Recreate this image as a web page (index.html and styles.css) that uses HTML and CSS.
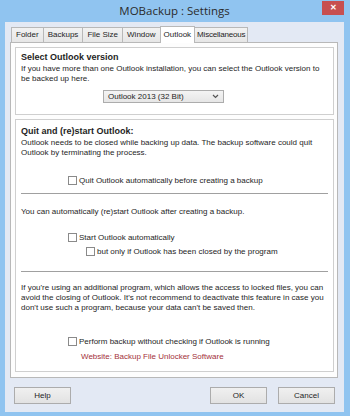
FILE: index.html
```html
<!DOCTYPE html>
<html lang="en">
<head>
    <meta charset="UTF-8">
    <title>MOBackup : Settings</title>
    <link rel="stylesheet" href="styles.css">
</head>
<body>
    <div class="window">
        <div class="titlebar">
            <span></span>
            <div class="title">MOBackup : Settings</div>
            <div class="close">&#x2715;</div>
        </div>
        <div class="client">
            <div class="tabs">
                <div class="tab">Folder</div>
                <div class="tab">Backups</div>
                <div class="tab">File Size</div>
                <div class="tab">Window</div>
                <div class="tab active">Outlook</div>
                <div class="tab misc">Miscellaneous</div>
            </div>
            <div class="panel">
                <div class="group first">
                    <div class="heading">Select Outlook version</div>
                    <p>If you have more than one Outlook installation, you can select the Outlook version to be backed up here.</p>
                    <div class="select">
                        <span>Outlook 2013 (32 Bit)</span>
                        <svg width="7" height="5" viewBox="0 0 7 5"><path d="M1 1 L3.5 3.5 L6 1" fill="none" stroke="#555" stroke-width="1.2"/></svg>
                    </div>
                </div>
                <div class="group second">
                    <div class="heading">Quit and (re)start Outlook:</div>
                    <p>Outlook needs to be closed while backing up data. The backup software could quit Outlook by terminating the process.</p>
                    <label class="check quit"><span class="box"></span>Quit Outlook automatically before creating a backup</label>
                    <div class="sep"></div>
                    <p class="restart">You can automatically (re)start Outlook after creating a backup.</p>
                    <label class="check start"><span class="box"></span>Start Outlook automatically</label>
                    <label class="check only"><span class="box"></span>but only if Outlook has been closed by the program</label>
                    <div class="sep second-sep"></div>
                    <p class="locked">If you're using an additional program, which allows the access to locked files, you can avoid the closing of Outlook. It's not recommend to deactivate this feature in case you don't use such a program, because your data can't be saved then.</p>
                    <label class="check perform"><span class="box"></span>Perform backup without checking if Outlook is running</label>
                    <a class="link" href="#">Website: Backup File Unlocker Software</a>
                </div>
            </div>
            <div class="buttons">
                <button>Help</button>
                <span class="spacer"></span>
                <button>OK</button>
                <button>Cancel</button>
            </div>
        </div>
    </div>
</body>
</html>
```

FILE: styles.css
```css
body {
    margin: 0;
    padding: 0;
    font-family: "Liberation Sans", Arial, sans-serif;
    font-size: 8px;
    color: #1e1e1e;
}
.window {
    width: 350px;
    height: 416px;
    box-sizing: border-box;
    background-color: #90c4f0;
    padding: 0 6px 4px 5px;
    display: flex;
    flex-direction: column;
}
.titlebar {
    height: 22px;
    display: grid;
    grid-template-columns: 1fr auto 1fr;
    align-items: start;
}
.title {
    font-family: "Open Sans", "Liberation Sans", sans-serif;
    font-size: 11.5px;
    color: #2b2b2b;
    padding-top: 3px;
}
.close {
    justify-self: end;
    width: 22px;
    height: 14px;
    margin-top: 1px;
    background-color: #c74f50;
    color: #fff;
    font-size: 8px;
    font-weight: bold;
    text-align: center;
    line-height: 14px;
}
.client {
    flex: 1;
    background-color: #e3e9f4;
    padding: 4px 6px 0 5px;
    display: flex;
    flex-direction: column;
}
.tabs {
    display: flex;
    align-items: flex-end;
    padding-left: 1px;
    height: 16px;
    position: relative;
    z-index: 1;
}
.tab {
    height: 15px;
    box-sizing: border-box;
    padding: 0 4px;
    line-height: 14px;
    border: 1px solid #b8b8b8;
    border-bottom: none;
    margin-right: -1px;
    background: linear-gradient(#f2f2f2, #e6e6e6);
}
.tab.active {
    height: 17px;
    margin-bottom: -1px;
    background: #fff;
    line-height: 15px;
    padding: 0 3px;
}
.tab.misc {
    padding: 0 2px;
    letter-spacing: -0.2px;
}
.panel {
    height: 336px;
    box-sizing: border-box;
    border: 1px solid #b8b8b8;
    background-color: #fdfdfd;
    padding: 4px 3px 0 4px;
}
.group {
    border: 1px solid #cfcfcf;
    background-color: #fff;
    padding: 4px 5px 0 5px;
}
.group.first {
    height: 68px;
    box-sizing: border-box;
}
.group.second {
    margin-top: 4px;
    height: 253px;
    box-sizing: border-box;
    padding-top: 6px;
}
.heading {
    font-weight: bold;
    font-size: 9px;
    line-height: 10px;
}
p {
    margin: 2px 0 0;
    line-height: 10px;
}
.select {
    margin: 6px 0 0 82px;
    width: 121px;
    height: 13px;
    box-sizing: border-box;
    border: 1px solid #acacac;
    background: linear-gradient(#f4f4f4, #e6e6e6);
    display: flex;
    align-items: center;
    justify-content: space-between;
    padding: 0 4px 0 4px;
}
.check {
    display: flex;
    align-items: center;
    height: 10px;
    margin-left: 47px;
}
.box {
    width: 9px;
    height: 9px;
    box-sizing: border-box;
    border: 1px solid #8a8a8a;
    background-color: #fff;
    margin-right: 2px;
}
.check.quit {
    margin-top: 17px;
}
.sep {
    margin-top: 8px;
    border-top: 1px solid #a0a0a0;
    border-bottom: 1px solid #fff;
}
p.restart {
    margin-top: 12px;
}
.check.start {
    margin-top: 15px;
}
.check.only {
    margin-top: 4px;
    margin-left: 65px;
}
.sep.second-sep {
    margin-top: 15px;
}
p.locked {
    margin-top: 10px;
}
.check.perform {
    margin-top: 23px;
}
.link {
    display: block;
    margin: 6px 0 0 60px;
    color: #a3313a;
    text-decoration: none;
    line-height: 10px;
}
.buttons {
    display: flex;
    gap: 11px;
    padding: 9px 3px 0 4px;
}
.spacer {
    flex: 1;
}
button {
    width: 57px;
    height: 17px;
    font-family: "Liberation Sans", Arial, sans-serif;
    font-size: 8px;
    color: #1e1e1e;
    border: 1px solid #acacac;
    background: linear-gradient(#f0f0f0, #e2e2e2);
    padding: 0;
}
```
